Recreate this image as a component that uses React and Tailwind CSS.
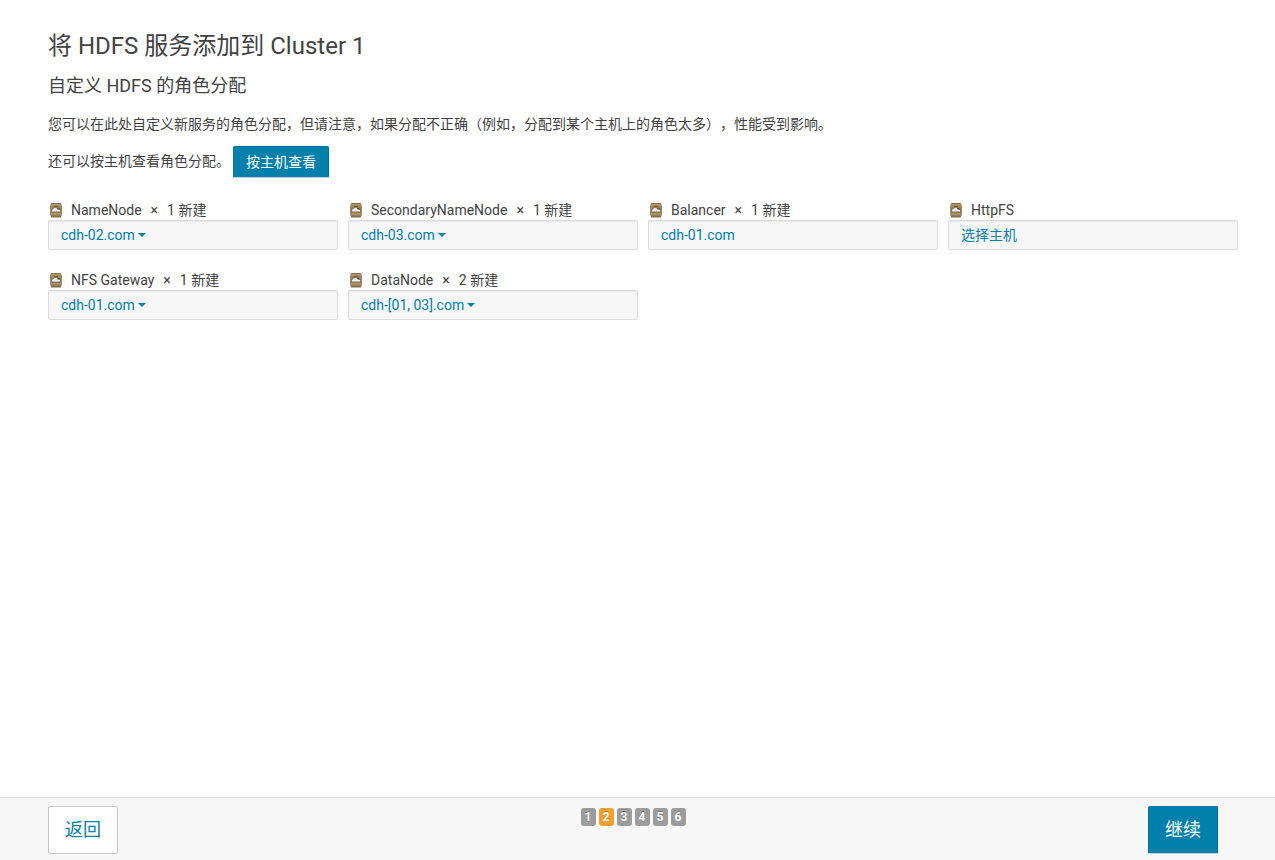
const roles = [
  { name: 'NameNode', count: 1, hosts: 'cdh-02.com', menu: true },
  { name: 'SecondaryNameNode', count: 1, hosts: 'cdh-03.com', menu: true },
  { name: 'Balancer', count: 1, hosts: 'cdh-01.com' },
  { name: 'HttpFS', hosts: '选择主机' },
  { name: 'NFS Gateway', count: 1, hosts: 'cdh-01.com', menu: true },
  { name: 'DataNode', count: 2, hosts: 'cdh-[01, 03].com', menu: true },
];

function HdfsIcon() {
  return (
    <svg className="size-4 shrink-0" viewBox="0 0 16 16" aria-hidden="true">
      <path d="M3.5 1h9q.5 0 .5.5V3H3V1.500q0-.5.5-.5z" fill="#86704b" />
      <rect x="2" y="2" width="12" height="12" rx="1.5" fill="#a18a60" />
      <path d="M2.500 2.500h11v1h-11z" fill="#b29b70" />
      <rect x="6" y="4" width="4" height="1" fill="#5f4f35" />
      <path d="M4 5.500h8l1 1V10H3V6.500z" fill="#887657" />
      <path d="M4 9V8l2.500-2h2l1 1.500 2.500.5V9.500H4z" fill="#e8edf8" />
      <path d="M9 6h2.500l.5 1.500-2-.5z" fill="#5f5240" />
      <path d="M3 10h10v.5H3z" fill="#75623f" />
      <path d="M2.500 11h11v1.500h-11z" fill="#ab9467" />
      <path d="M3 13.500h10V15q0 .5-.5.5h-9Q3 15.500 3 15z" fill="#82704c" />
    </svg>
  );
}

function Role({ name, count, hosts, menu }) {
  return (
    <li>
      <div className="flex h-5 items-center gap-[7px] leading-5">
        <HdfsIcon />
        <div className="flex gap-[9px]">
          <span>{name}</span>
          {count && <span>×</span>}
          {count && <span>{count} 新建</span>}
        </div>
      </div>
      <button
        type="button"
        aria-label={`${name} ${hosts}`}
        className="flex h-[30px] w-full items-center gap-[3px] rounded-xs border border-[#dcdcdc] bg-[#f7f7f7] px-3 text-left leading-5 text-[#0080ab] shadow-[inset_0_1px_1px_rgba(0,0,0,0.06)]"
      >
        <span>{hosts}</span>
        {menu && (
          <svg className="h-1 w-2" viewBox="0 0 8 4" fill="currentColor" aria-hidden="true">
            <path d="M0 0h8L4 4z" />
          </svg>
        )}
      </button>
    </li>
  );
}

export default function App() {
  return (
    <div className="flex min-h-screen flex-col bg-white font-[Roboto,'Noto_Sans_CJK_SC',sans-serif] text-sm text-[#424242] [text-spacing-trim:space-all]">
      <main className="grow pt-[31px] pr-6 pb-6 pl-12">
        <h1 className="text-2xl leading-[30px]">将 HDFS 服务添加到 Cluster 1</h1>
        <h2 className="mt-[15px] text-lg leading-5">自定义 HDFS 的角色分配</h2>
        <p className="mt-[18px] leading-5">
          您可以在此处自定义新服务的角色分配，但请注意，如果分配不正确（例如，分配到某个主机上的角色太多），性能受到影响。
        </p>
        <div className="mt-3 flex items-start gap-[3px]">
          <p className="leading-[30px]">还可以按主机查看角色分配。</p>
          <button
            type="button"
            className="h-8 rounded-xs border border-[#00739a] border-b-[#b8d3dc] bg-[#0080ab] px-3 text-white"
          >
            按主机查看
          </button>
        </div>
        <ul className="mt-[22px] grid grid-cols-[repeat(auto-fill,290px)] gap-x-2.5 gap-y-5">
          {roles.map((role) => (
            <Role key={role.name} {...role} />
          ))}
        </ul>
      </main>
      <footer className="flex items-start justify-between border-t border-[#dcdcdc] bg-[#f7f7f7] pt-2 pr-[57px] pb-1.5 pl-12 text-lg">
        <button type="button" className="h-12 rounded-xs border border-[#c8c8c8] bg-white px-4 text-[#0080ab]">
          返回
        </button>
        <ol className="mt-0.5 flex gap-[3px] text-xs leading-[18px] font-bold text-white [text-shadow:0_-1px_0_rgba(0,0,0,0.25)]">
          {[1, 2, 3, 4, 5, 6].map((step) => (
            <li
              key={step}
              aria-current={step === 2 ? 'step' : undefined}
              className={`w-[15px] rounded-[3px] text-center ${step === 2 ? 'bg-[#f0a02d]' : 'bg-[#9c9c9c]'}`}
            >
              {step}
            </li>
          ))}
        </ol>
        <button
          type="button"
          className="h-12 rounded-xs border border-[#00739a] border-b-[#b8d3dc] bg-[#0080ab] px-4 text-white"
        >
          继续
        </button>
      </footer>
    </div>
  );
}
